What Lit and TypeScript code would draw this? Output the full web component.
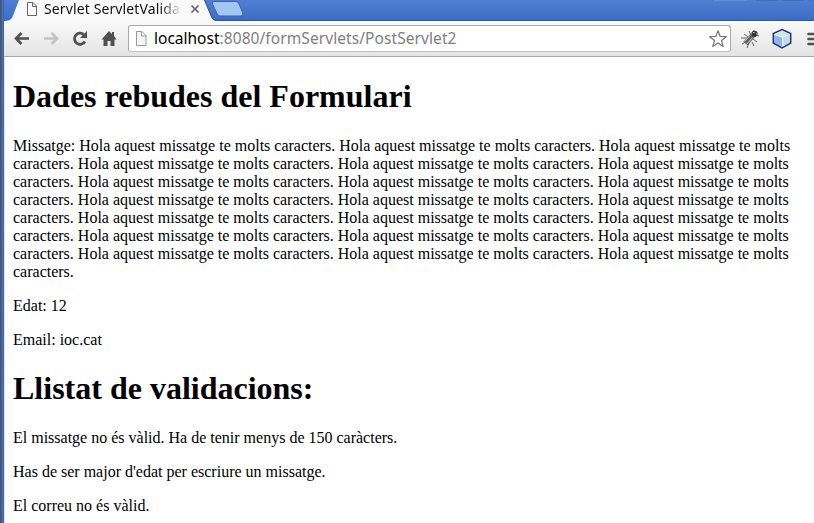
import { LitElement, html, css } from "lit";
import { customElement } from "lit/decorators.js";

const SENTENCE = "Hola aquest missatge te molts caracters.";

@customElement("browser-tabs")
class BrowserTabs extends LitElement {
  static styles = css`
    :host { display: block; height: 21px; position: relative; overflow: hidden;
      background: linear-gradient(#4f7fd4, #3f6fc6 85%, #3c67b5); }
    .shape { position: absolute; inset: 0; }
    .tab { position: relative; display: flex; align-items: center; height: 18px; padding-left: 22px; }
    .title { flex: none; margin-left: 6px; width: 139px; overflow: hidden; white-space: nowrap;
      font: 14px/18px "Noto Sans", sans-serif; letter-spacing: 0.12px; color: #111;
      -webkit-mask-image: linear-gradient(90deg, #000 116px, transparent 138px); }
    .close { margin-left: 7px; }
    svg { display: block; flex: none; }
  `;
  render() {
    return html`
      <svg class="shape" width="810" height="21">
        <path d="M0 21C4 21 7 20 8.500 17L15 0H200L208 18Q209 20 212 21Z" fill="#f9f9f9"/>
        <path d="M200.500 0L208 18Q209 20.500 213 20.500H810" fill="none" stroke="#315795"/>
        <path d="M210 1.500H232Q234 1.500 235 4L238.800 13Q239.500 16 237 16H216Q214 16 213 13.500L208.500 4Q207.500 1.500 210 1.500Z" fill="#a3c6f2" stroke="#3a62a8"/>
        <path d="M710 0H743" stroke="#7c9fdf"/><path d="M752 0H774M778 0H800M804 0H810" stroke="#3a62a8"/>
      </svg>
      <div class="tab">
        <svg width="12" height="16"><path d="M1.500 1.500H7L10.500 5V14.500H1.500ZM6.500 1.500V5.500H10.500" fill="#fff" stroke="#666"/></svg>
        <div class="title">Servlet ServletValida</div>
        <svg class="close" width="10" height="18"><path d="M1.500 5.500L8.500 12.500M8.500 5.500L1.500 12.500" stroke="#666" stroke-width="1.700"/></svg>
      </div>`;
  }
}

@customElement("browser-toolbar")
class BrowserToolbar extends LitElement {
  static styles = css`
    :host { display: flex; align-items: center; height: 35px; box-sizing: content-box;
      border-bottom: 1px solid #a8a8a8; background: linear-gradient(#f9f9f9, #e4e4e4); overflow: hidden; }
    svg { display: block; flex: none; }
    .nav { display: flex; flex: none; box-sizing: border-box; gap: 9px; padding-left: 8px; width: 124px; }
    .bar { display: flex; flex: none; align-items: center; box-sizing: border-box; width: 603px; height: 27px;
      border: 1px solid #aaa; border-bottom-color: #c2c2c2; border-radius: 3px; background: #fff; padding: 0 2px 0 6px; }
    .url { flex: 1; margin-left: 7px; font: 15.5px/23px "Noto Sans", sans-serif; letter-spacing: 0.08px; color: #808080; white-space: nowrap; }
    .host { color: #000; letter-spacing: 0; }
    .ext { display: flex; flex: none; gap: 11px; padding-left: 9px; align-items: center; }
  `;
  render() {
    return html`
      <div class="nav">
        <svg width="20" height="20"><path d="M17 9.500H4M9.500 4L4 9.500L9.500 15" fill="none" stroke="#505050" stroke-width="2.600"/></svg>
        <svg width="20" height="20"><path d="M3 9.500H16M10.500 4L16 9.500L10.500 15" fill="none" stroke="#c3c3c3" stroke-width="2.600"/></svg>
        <svg width="20" height="20"><path d="M15 12.500A5.600 5.600 0 1 1 13.800 5.500" fill="none" stroke="#505050" stroke-width="2.800"/><path d="M17 2V9H10Z" fill="#505050"/></svg>
        <svg width="20" height="20"><path d="M10 2L13 5V3H15V7L17.500 10.500H15.500V17H11.500V12H8.500V17H4.500V10.500H2.500Z" fill="#505050"/></svg>
      </div>
      <div class="bar">
        <svg width="12" height="18"><path d="M1.500 1.500H7L11 5.500V15.500H1.500ZM6.500 1.500V6H11" fill="#f6f6f6" stroke="#999"/></svg>
        <div class="url"><span class="host">localhost</span>:8080/formServlets/PostServlet2</div>
        <svg width="20" height="20"><path d="M10 1.800L12.200 7.500L18.300 7.700L13.500 11.500L15.200 17.500L10 14L4.800 17.500L6.500 11.500L1.700 7.700L7.800 7.500Z" fill="#fff" stroke="#777" stroke-width="1.200" stroke-linejoin="round"/></svg>
      </div>
      <div class="ext">
        <svg width="20" height="20" fill="none" stroke="#666">
          <path d="M1 9L7 9M4 5L8 8M9 2L11 6M2 15L7 12M7 19L9 14M14 17L12 13M17 13L13 10M14 1L14 4M19 7L16 6" stroke-width="1"/>
          <path d="M12.500 6.500L5.500 14.500" stroke-width="5.500" stroke="#606060"/>
          <path d="M12.500 8.500L6.500 15.500M10 6.500L4.500 12.500" stroke="#d0d0d0"/>
          <circle cx="14.500" cy="4.800" r="3.100" fill="#333" stroke="none"/><path d="M13 3.500H14.500M16 5H17" stroke="#ddd"/></svg>
        <svg width="22" height="22"><path d="M11 1.500L19.700 5.500V15L11 20L2.300 15V5.500Z" fill="#add2ec" stroke="#25356e" stroke-width="1.500"/>
          <path d="M11 2.600L18.500 6L12 9L3.500 6Z" fill="#cfe8e4"/><path d="M3.200 7L11.500 9.500V18.800L3.200 14.600Z" fill="#8fb6ec"/><path d="M12 9.500L18.800 7V14.600L12 18.500Z" fill="#c4dce9"/><path d="M3.500 6.500L11.700 9.300L18.500 6.500M11.700 9.300V18.500" fill="none" stroke="#edf8ff"/></svg>
        <svg width="16" height="20"><path d="M4.500 5H16M4.500 10H16M4.500 15H16" stroke="#505050" stroke-width="2.600" stroke-linecap="round"/></svg>
      </div>`;
  }
}

@customElement("form-result")
class FormResult extends LitElement {
  static styles = css`
    :host { display: block; padding: 0 8px; font: 16px/18px "Liberation Serif", serif; color: #000; }
    h1 { font-size: 32px; line-height: 37px; margin: 21px 0 22px; }
    p { margin: 16px 0; }
    .message { width: 786px; }
  `;
  render() {
    return html`
      <h1>Dades rebudes del Formulari</h1>
      <p class="message">Missatge: ${Array(21).fill(SENTENCE).join(" ")}</p>
      <p>Edat: 12</p>
      <p>Email: ioc.cat</p>
      <h1>Llistat de validacions:</h1>
      <p>El missatge no és vàlid. Ha de tenir menys de 150 caràcters.</p>
      <p>Has de ser major d'edat per escriure un missatge.</p>
      <p>El correu no és vàlid.</p>`;
  }
}

@customElement("app-root")
class AppRoot extends LitElement {
  static styles = css`
    :host { display: flex; width: 814px; height: 523px; overflow: hidden; background: #fff; }
    .edge { flex: none; width: 4px; box-sizing: border-box; background: linear-gradient(90deg, #555 0 1px, #3a5f9f 1px 2px, #4373c9 2px 3px, #3c66b3 3px); }
    .window { flex: 1; min-width: 0; }
    .page { box-sizing: border-box; height: 466px; border-left: 1px solid #e4e4e4; overflow: hidden; }
  `;
  render() {
    return html`
      <div class="edge"></div>
      <div class="window">
        <browser-tabs></browser-tabs>
        <browser-toolbar></browser-toolbar>
        <div class="page"><form-result></form-result></div>
      </div>`;
  }
}
